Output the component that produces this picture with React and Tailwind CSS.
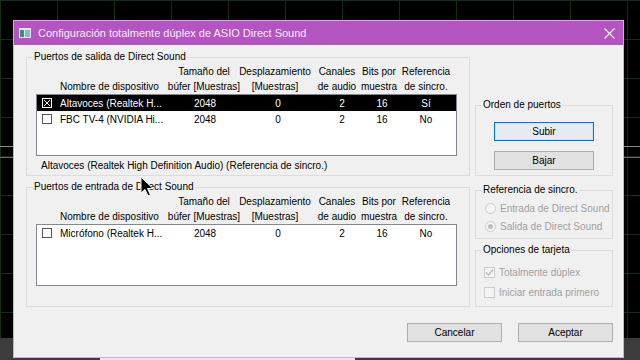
import React from 'react';

const font = { fontFamily: '"Liberation Sans", Arial, sans-serif' };

const headCols = 'grid grid-cols-[126px_82px_60px_64px_20px_74px]';
const rowCols = 'grid grid-cols-[126px_84px_62px_66px_14px_74px]';

function Group({ label, className, children }) {
    return (
        <div className={`relative border border-[#dcdcdc] ${className}`}>
            <span className="absolute -top-[7px] left-[6px] bg-[#f0f0f0] px-[1px] leading-[12px] text-black whitespace-nowrap">
                {label}
            </span>
            {children}
        </div>
    );
}

function ListCheck({ checked, selected }) {
    return (
        <span
            className={`flex h-[10px] w-[10px] shrink-0 items-center justify-center border ${
                selected ? 'border-white' : 'border-[#555]'
            }`}
        >
            {checked && (
                <svg width="8" height="8" viewBox="0 0 8 8">
                    <path d="M1 1L7 7M7 1L1 7" stroke="white" strokeWidth="1" />
                </svg>
            )}
        </span>
    );
}

function HeadCell({ top, bottom }) {
    return (
        <div className="flex flex-col items-center whitespace-nowrap">
            <span>{top}</span>
            <span>{bottom}</span>
        </div>
    );
}

function Header() {
    return (
        <div className={`${headCols} ml-[10px] h-[30px] leading-[15px] text-black`}>
            <div className="flex items-end pl-[23px] whitespace-nowrap">Nombre de dispositivo</div>
            <HeadCell top="Tamaño del" bottom="búfer [Muestras]" />
            <HeadCell top="Desplazamiento" bottom="[Muestras]" />
            <HeadCell top="Canales" bottom="de audio" />
            <HeadCell top="Bits por" bottom="muestra" />
            <HeadCell top="Referencia" bottom="de sincro." />
        </div>
    );
}

function Cell({ children }) {
    return <div className="flex justify-center whitespace-nowrap">{children}</div>;
}

function Row({ name, sync, checked, selected }) {
    return (
        <div
            className={`${rowCols} h-[16px] items-center ${
                selected ? 'bg-black text-white' : 'text-black'
            }`}
        >
            <div className="flex items-center gap-[8px] pl-[5px] whitespace-nowrap">
                <ListCheck checked={checked} selected={selected} />
                <span>{name}</span>
            </div>
            <Cell>2048</Cell>
            <Cell>0</Cell>
            <Cell>2</Cell>
            <Cell>16</Cell>
            <Cell>{sync}</Cell>
        </div>
    );
}

function ListBox({ children }) {
    return (
        <div className="ml-[9px] h-[62px] w-[421px] overflow-hidden border border-[#828790] bg-white">
            {children}
        </div>
    );
}

function Button({ children, focused }) {
    return (
        <div
            className={`flex h-[19px] items-center justify-center text-black ${
                focused
                    ? 'border border-[#0078d7] bg-[#e5ebf1] shadow-[inset_0_0_0_1px_#cfe3f5]'
                    : 'border border-[#adadad] bg-[#e1e1e1]'
            }`}
        >
            {children}
        </div>
    );
}

function Radio({ checked, children }) {
    return (
        <div className="flex h-[18px] items-center gap-[4px] pl-[9px] text-[#a0a0a0] whitespace-nowrap">
            <span className="flex h-[11px] w-[11px] shrink-0 items-center justify-center rounded-full border border-[#cccccc] bg-[#f4f4f4]">
                {checked && <span className="h-[5px] w-[5px] rounded-full bg-[#c0c0c0]" />}
            </span>
            <span>{children}</span>
        </div>
    );
}

function Check({ checked, children }) {
    return (
        <div className="flex h-[20px] items-center gap-[4px] pl-[8px] text-[#a0a0a0] whitespace-nowrap">
            <span className="flex h-[11px] w-[11px] shrink-0 items-center justify-center border border-[#cccccc] bg-[#f4f4f4]">
                {checked && (
                    <svg width="9" height="9" viewBox="0 0 9 9">
                        <path d="M1 4.5L3.5 7L8 1.5" fill="none" stroke="#b8b8b8" strokeWidth="1.2" />
                    </svg>
                )}
            </span>
            <span>{children}</span>
        </div>
    );
}

export default function App() {
    return (
        <div
            className="relative h-[360px] w-[640px] overflow-hidden bg-black bg-[linear-gradient(to_right,#10301a_1px,transparent_1px),linear-gradient(to_bottom,#10301a_1px,transparent_1px)] bg-size-[57px_39px] text-[10px]"
            style={font}
        >
            {/* desktop traces behind the window */}
            <div className="absolute left-0 top-[146px] h-px w-full bg-[#8a8a8a]" />
            <div className="absolute left-0 top-[157px] h-px w-full bg-[#6a6a6a]" />
            <div className="absolute left-0 top-[338px] h-[22px] w-full bg-[#3c3c3c]" />
            <div className="absolute bottom-0 left-[100px] h-[3px] w-[255px] bg-[#e8e8e8]" />

            {/* Window */}
            <div className="absolute left-[13px] top-[20px] flex h-[338px] w-[611px] flex-col border border-[#d9a6df] bg-[#f0f0f0]">
                {/* Title bar */}
                <div className="flex h-[24px] shrink-0 items-center bg-[#b354c1] pl-[5px] pr-[8px]">
                    <svg width="12" height="10" viewBox="0 0 12 10" className="mr-[7px]">
                        <rect x="0" y="0" width="12" height="10" fill="#dfe6ea" />
                        <rect x="1" y="2" width="4" height="7" fill="#3e8c74" />
                        <rect x="6" y="2" width="5" height="7" fill="#8fb3c8" />
                    </svg>
                    <span className="flex-1 text-[11px] text-[#fbe9fd]">
                        Configuración totalmente dúplex de ASIO Direct Sound
                    </span>
                    <svg width="11" height="11" viewBox="0 0 11 11">
                        <path d="M0.5 0.5L10.5 10.5M10.5 0.5L0.5 10.5" stroke="#fdf3fe" strokeWidth="1.2" />
                    </svg>
                </div>

                {/* Body */}
                <div className="flex flex-1 flex-col pl-[12px] pt-[12px]">
                    <div className="flex">
                        {/* Left column */}
                        <div className="flex w-[444px] flex-col">
                            <Group label="Puertos de salida de Direct Sound" className="h-[119px]">
                                <div className="mt-[6px]">
                                    <Header />
                                    <ListBox>
                                        <Row name="Altavoces (Realtek H..." sync="Sí" checked selected />
                                        <Row name="FBC TV-4 (NVIDIA Hi..." sync="No" />
                                    </ListBox>
                                    <div className="ml-[14px] mt-[4px] leading-[12px] text-black">
                                        Altavoces (Realtek High Definition Audio) (Referencia de sincro.)
                                    </div>
                                </div>
                            </Group>

                            <Group label="Puertos de entrada de Direct Sound" className="mt-[11px] h-[120px]">
                                <div className="mt-[6px]">
                                    <Header />
                                    <ListBox>
                                        <Row name="Micrófono (Realtek H..." sync="No" />
                                    </ListBox>
                                </div>
                            </Group>
                        </div>

                        {/* Right column */}
                        <div className="ml-[5px] flex w-[138px] flex-col">
                            <Group label="Orden de puertos" className="mt-[48px] h-[71px]">
                                <div className="ml-[18px] mt-[16px] flex w-[100px] flex-col gap-[10px]">
                                    <Button focused>Subir</Button>
                                    <Button>Bajar</Button>
                                </div>
                            </Group>

                            <Group label="Referencia de sincro." className="mt-[14px] h-[49px]">
                                <div className="mt-[8px]">
                                    <Radio>Entrada de Direct Sound</Radio>
                                    <Radio checked>Salida de Direct Sound</Radio>
                                </div>
                            </Group>

                            <Group label="Opciones de tarjeta" className="mt-[11px] h-[57px]">
                                <div className="mt-[11px]">
                                    <Check checked>Totalmente dúplex</Check>
                                    <Check>Iniciar entrada primero</Check>
                                </div>
                            </Group>
                        </div>
                    </div>

                    {/* Dialog buttons */}
                    <div className="mt-[16px] flex justify-end gap-[16px] pr-[10px]">
                        <div className="w-[95px]"><Button>Cancelar</Button></div>
                        <div className="w-[95px]"><Button>Aceptar</Button></div>
                    </div>
                </div>
            </div>

            {/* Mouse pointer */}
            <svg
                className="absolute left-[140px] top-[176px]"
                width="14"
                height="22"
                viewBox="0 0 14 22"
            >
                <path
                    d="M1 1L1 17L5 13.5L8 20L10.5 19L7.5 12.5L13 12.5Z"
                    fill="black"
                    stroke="white"
                    strokeWidth="1"
                />
            </svg>
        </div>
    );
}
